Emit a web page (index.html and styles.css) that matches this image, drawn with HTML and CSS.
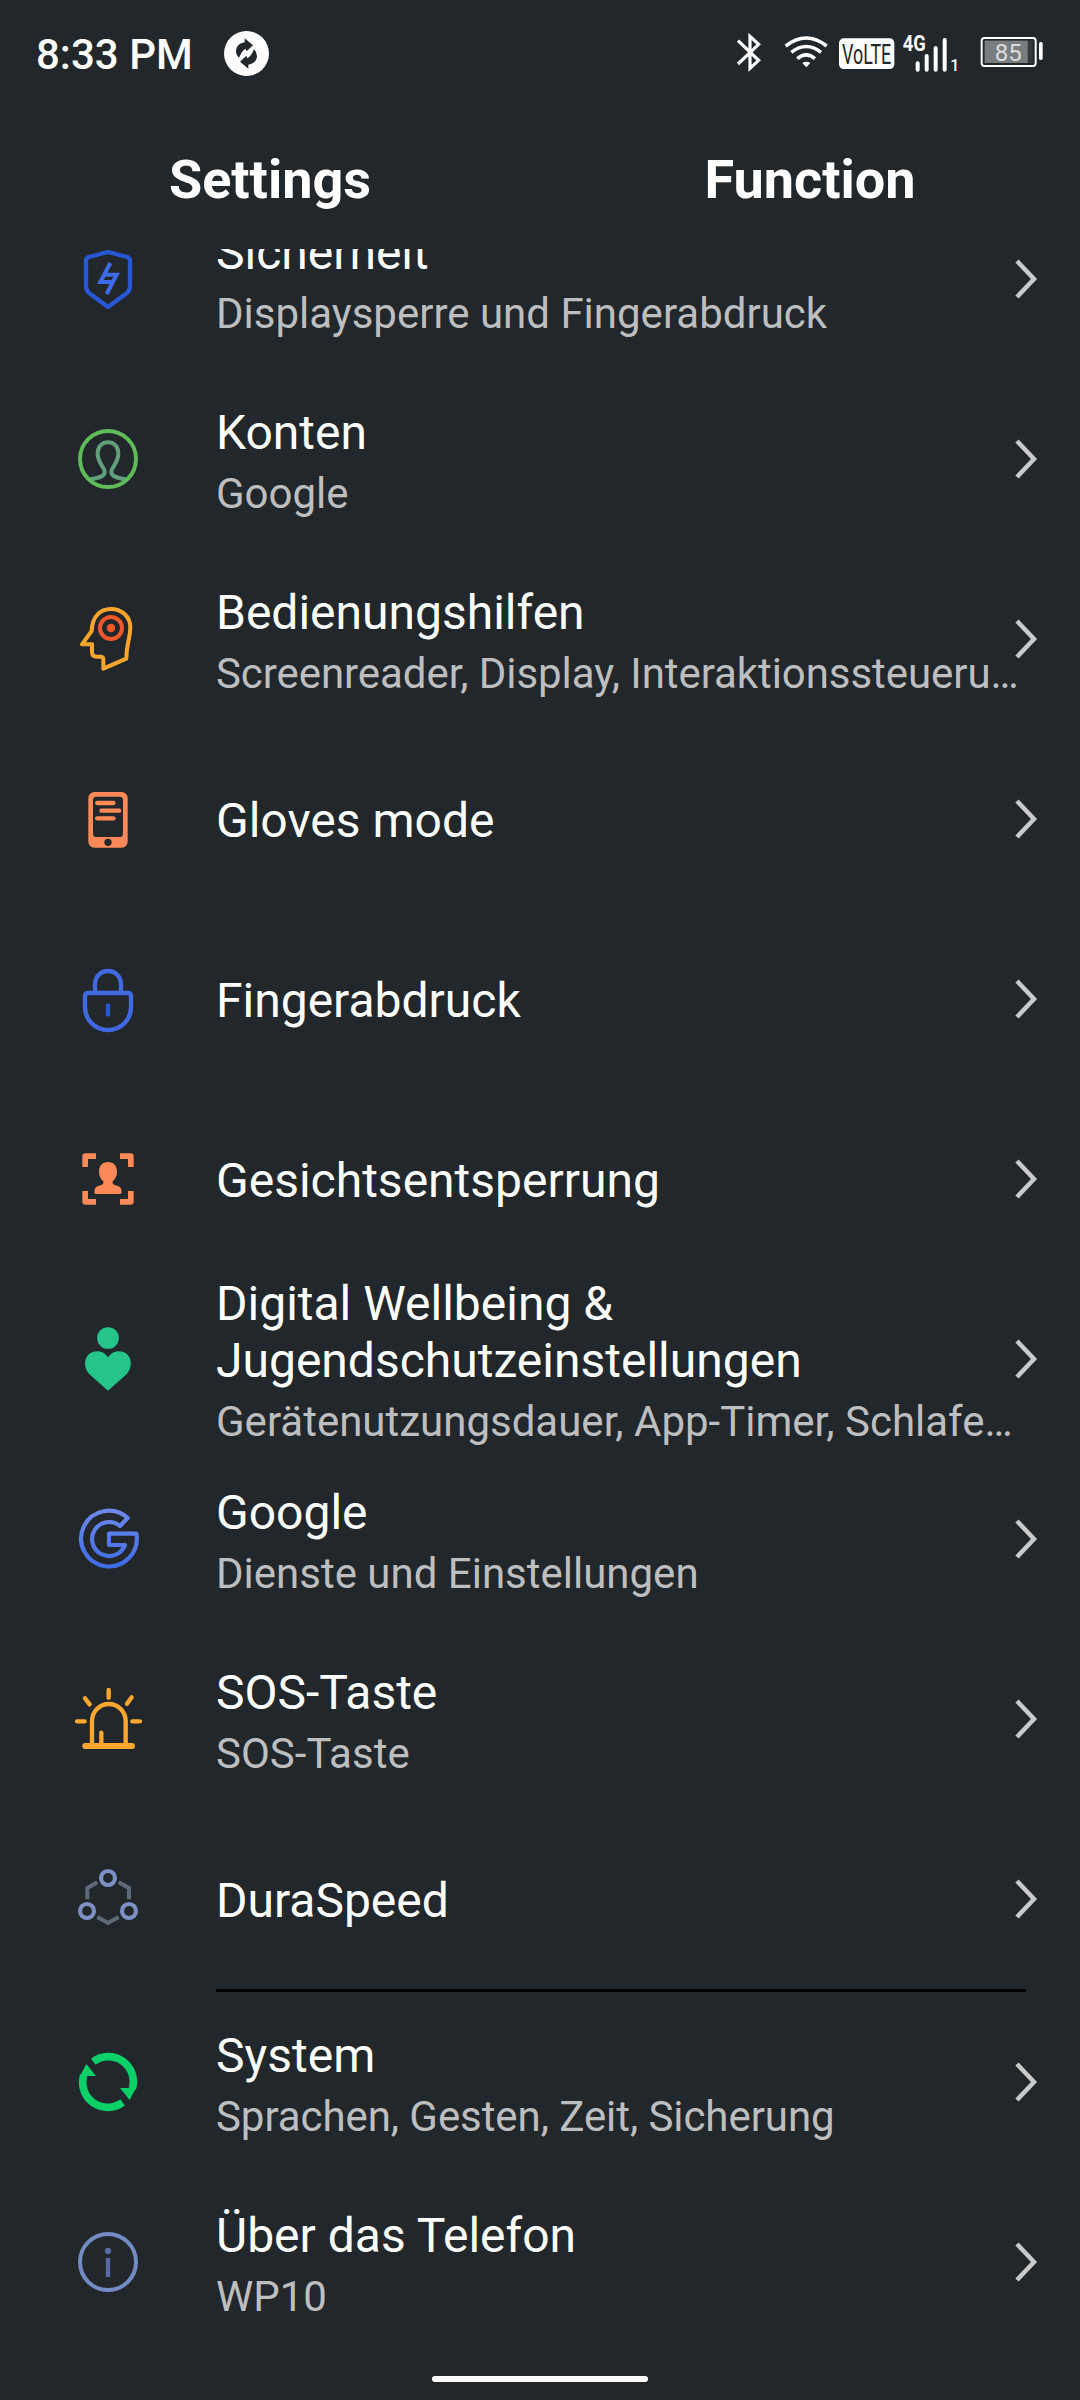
FILE: index.html
```html
<!DOCTYPE html>
<html lang="de">
<head>
<meta charset="utf-8">
<title>Settings</title>
<link rel="stylesheet" href="styles.css">
</head>
<body>
<div class="screen">
  <header class="statusbar">
    <span class="clock">8:33 PM</span>
    <svg class="sync" viewBox="0 0 135 135">
      <circle cx="67.5" cy="67.5" r="67.5" fill="#fff"/>
      <g fill="#22272b">
        <path id="half" d="M62 22 L87 43 L68 61 L65 53 Q54 58 45 80 Q33 68 37 53 Q43 36 62 34 Z"/>
        <use href="#half" transform="rotate(180 67.5 67.5)"/>
      </g>
    </svg>
    <div class="indicators">
      <svg width="40" height="46" viewBox="100 90 120 138" fill="none" stroke="#fff" stroke-width="9.500">
        <path d="M115 122 L177 181 L151 205 V109 L177 133 L115 192"/>
      </svg>
      <svg width="60" height="46" viewBox="220 90 180 138" fill="none" stroke="#fff" stroke-width="10.500">
        <path d="M258 138 Q320 90 381 138"/>
        <path d="M275 157 Q320 122 364 157"/>
        <path d="M293 176 Q320 153 346 176"/>
        <path d="M308 189 Q320 182 332 189 L320 202Z" fill="#fff" stroke="none"/>
      </svg>
      <svg width="65" height="46" viewBox="400 90 195 138">
        <rect x="418" y="115" width="166" height="92" rx="14" fill="#fff"/>
        <text class="volte" transform="translate(427 192) scale(.655 1)">VoLTE</text>
      </svg>
      <svg width="70" height="46" viewBox="595 90 210 138">
        <text class="net" transform="translate(609 154) scale(.86 1)">4G</text>
        <g stroke="#fff" stroke-width="12" stroke-linecap="round">
          <path d="M654 190V209M681 168V209M708 144V209M735 120V209"/>
        </g>
        <text class="sim" x="752" y="213">1</text>
      </svg>
      <svg width="77" height="46" viewBox="805 90 231 138">
        <rect x="846" y="114" width="162" height="84" rx="8" fill="none" stroke="#fff" stroke-width="6"/>
        <rect x="855" y="122" width="144" height="67" fill="#34393c"/>
        <rect x="855" y="122" width="129" height="67" fill="#7a7d80"/>
        <rect x="1018" y="126" width="11" height="54" rx="5" fill="#fff"/>
        <text class="level" x="885" y="182">85</text>
      </svg>
    </div>
  </header>

  <nav class="tabs">
    <div class="tab">Settings</div>
    <div class="tab">Function</div>
  </nav>

  <main class="viewport">
    <div class="list">
      <div class="row">
        <svg class="icon" viewBox="0 0 216 216" fill="none">
          <path d="M108 27 L166 42 Q174 45 174 53 V130 Q174 143 164 151 L108 192 L52 151 Q42 143 42 130 V53 Q42 45 50 42Z" stroke="#2857d4" stroke-width="13" stroke-linejoin="round"/>
          <path d="M115 60 L85 117 H118 M104 153 L134 95 H98" stroke="#3f6ae8" stroke-width="12"/>
        </svg>
        <div class="label"><div class="title">Sicherheit</div><div class="sub">Displaysperre und Fingerabdruck</div></div>
        <svg class="chevron" viewBox="0 0 24 42"><path d="M3 3 L20 21 L3 39"/></svg>
      </div>
      <div class="row">
        <svg class="icon" viewBox="0 0 216 216" fill="none">
          <path d="M54 169 C84 164 98 160 98 146 C98 132 77 122 77 91 C77 70 91 58 108 58 C125 58 139 70 139 91 C139 122 118 132 118 146 C118 160 132 164 162 169" stroke="#62a07d" stroke-width="12"/>
          <circle cx="108" cy="108" r="84" stroke="#5fbb5a" stroke-width="12"/>
        </svg>
        <div class="label"><div class="title">Konten</div><div class="sub">Google</div></div>
        <svg class="chevron" viewBox="0 0 24 42"><path d="M3 3 L20 21 L3 39"/></svg>
      </div>
      <div class="row">
        <svg class="icon" viewBox="0 0 216 216" fill="none">
          <path d="M30 124 H60 V146 Q60 161 74 161 H86 Q94 161 94 169 V197 L163 167 Q163 145 168 120 C174 92 175 90 175 73 C175 42 150 18 117 18 C84 18 60 42 59 84 Z" stroke="#fba52e" stroke-width="12" stroke-linejoin="round"/>
          <circle cx="117" cy="75" r="33" stroke="#f0572a" stroke-width="12"/>
          <circle cx="117" cy="75" r="12.500" fill="#f0572a"/>
        </svg>
        <div class="label"><div class="title">Bedienungshilfen</div><div class="sub tight">Screenreader, Display, Interaktionssteueru…</div></div>
        <svg class="chevron" viewBox="0 0 24 42"><path d="M3 3 L20 21 L3 39"/></svg>
      </div>
      <div class="row">
        <svg class="icon" viewBox="0 0 216 216" fill="#ff8a57">
          <rect x="49" y="27" width="118" height="167" rx="18"/>
          <rect x="63" y="41" width="90" height="121" rx="10" fill="#22272b"/>
          <circle cx="108" cy="178" r="11" fill="#22272b"/>
          <rect x="69" y="53.500" width="62" height="13" rx="6.500"/>
          <rect x="82" y="76.500" width="66" height="13" rx="6.500"/>
          <rect x="69" y="99.500" width="62" height="13" rx="6.500"/>
        </svg>
        <div class="label"><div class="title">Gloves mode</div></div>
        <svg class="chevron" viewBox="0 0 24 42"><path d="M3 3 L20 21 L3 39"/></svg>
      </div>
      <div class="row">
        <svg class="icon" viewBox="0 0 216 216" fill="none" stroke="#4069e2" stroke-width="13">
          <path d="M69 88 V63 A39 39 0 0 1 147 63 V88"/>
          <path d="M49 90 H167 Q177 90 177 100 V132 C177 170 147 201 108 201 C69 201 39 170 39 132 V100 Q39 90 49 90Z"/>
          <path d="M108 122 V160" stroke="#2857d4"/>
        </svg>
        <div class="label"><div class="title">Fingerabdruck</div></div>
        <svg class="chevron" viewBox="0 0 24 42"><path d="M3 3 L20 21 L3 39"/></svg>
      </div>
      <div class="row">
        <svg class="icon" viewBox="0 0 216 216" fill="none">
          <path d="M39.500 72 V39.500 H72 M144 39.500 H176.500 V72 M176.500 144 V176.500 H144 M72 176.500 H39.500 V144" stroke="#ff8a57" stroke-width="17" stroke-linejoin="round"/>
          <path d="M108 57 C125 57 135 69 135 86 C135 100 129 109 122 115 Q120 125 130 127 Q149 129 149 147 Q149 153 144 153 H72 Q67 153 67 147 Q67 129 86 127 Q96 125 94 115 C87 109 81 100 81 86 C81 69 91 57 108 57Z" fill="#ff8a57"/>
        </svg>
        <div class="label"><div class="title">Gesichtsentsperrung</div></div>
        <svg class="chevron" viewBox="0 0 24 42"><path d="M3 3 L20 21 L3 39"/></svg>
      </div>
      <div class="row">
        <svg class="icon" viewBox="0 0 216 216" fill="#24c48b">
          <circle cx="108" cy="45" r="32.500"/>
          <path d="M108 203 L54 155 C28 130 38 85 75 85 C90 85 100 92 108 103 C116 92 126 85 141 85 C178 85 188 130 162 155Z"/>
        </svg>
        <div class="label"><div class="title">Digital Wellbeing &amp;<br>Jugendschutzeinstellungen</div><div class="sub">Gerätenutzungsdauer, App-Timer, Schlafe…</div></div>
        <svg class="chevron" viewBox="0 0 24 42"><path d="M3 3 L20 21 L3 39"/></svg>
      </div>
      <div class="row">
        <svg class="icon" viewBox="0 0 216 216" fill="none">
          <defs><linearGradient id="blue" x1="0" y1="0" x2="0" y2="1"><stop offset="0" stop-color="#6f88ec"/><stop offset="1" stop-color="#3f6de8"/></linearGradient></defs>
          <path d="M167 45 A83.500 83.500 0 1 0 193 92 H111 V126 H159 A51 51 0 1 1 144 69 Z" stroke="url(#blue)" stroke-width="12.500" stroke-linejoin="round"/>
        </svg>
        <div class="label"><div class="title">Google</div><div class="sub">Dienste und Einstellungen</div></div>
        <svg class="chevron" viewBox="0 0 24 42"><path d="M3 3 L20 21 L3 39"/></svg>
      </div>
      <div class="row">
        <svg class="icon" viewBox="0 0 216 216" fill="none" stroke="#ffa72f" stroke-width="13" stroke-linecap="round">
          <path d="M60 186 V114 A50.500 51 0 0 1 161 114 V186 M88 149 V186"/>
          <path d="M40 189 H180" stroke-width="18"/>
          <path d="M110 21 V44 M15 115 H38 M181 115 H204 M39 46 L53 64 M179 43 L165 62"/>
        </svg>
        <div class="label"><div class="title">SOS-Taste</div><div class="sub">SOS-Taste</div></div>
        <svg class="chevron" viewBox="0 0 24 42"><path d="M3 3 L20 21 L3 39"/></svg>
      </div>
      <div class="row">
        <svg class="icon" viewBox="0 0 216 216" fill="none">
          <g stroke="#7c90c4" stroke-width="12.500"><circle cx="108" cy="45" r="21"/><circle cx="45" cy="144" r="21"/><circle cx="171" cy="144" r="21"/></g>
          <path d="M76 58 L46 75 V109 M140 58 L171 75 V109 M76 162 L108 180 L140 162" stroke="#5e6a7a" stroke-width="12"/>
        </svg>
        <div class="label"><div class="title">DuraSpeed</div></div>
        <svg class="chevron" viewBox="0 0 24 42"><path d="M3 3 L20 21 L3 39"/></svg>
      </div>
      <div class="divider"></div>
      <div class="row">
        <svg class="icon" viewBox="0 0 216 216" fill="#0ad06a">
          <g id="arc"><path d="M64 47 A75 75 0 0 1 181 128" fill="none" stroke="#0ad06a" stroke-width="23"/><path d="M144 126 H192 L173 162Z"/></g>
          <use href="#arc" transform="rotate(180 108 108)"/>
        </svg>
        <div class="label"><div class="title">System</div><div class="sub tight">Sprachen, Gesten, Zeit, Sicherung</div></div>
        <svg class="chevron" viewBox="0 0 24 42"><path d="M3 3 L20 21 L3 39"/></svg>
      </div>
      <div class="row">
        <svg class="icon" viewBox="0 0 216 216" fill="none">
          <circle cx="108" cy="108" r="84" stroke="#738bc2" stroke-width="12"/>
          <circle cx="108" cy="75" r="9.500" fill="#5a6aa5"/>
          <path d="M108 96 V153" stroke="#5a6aa5" stroke-width="13"/>
        </svg>
        <div class="label"><div class="title">Über das Telefon</div><div class="sub">WP10</div></div>
        <svg class="chevron" viewBox="0 0 24 42"><path d="M3 3 L20 21 L3 39"/></svg>
      </div>
    </div>
  </main>

  <footer class="gesture"><div class="handle"></div></footer>
</div>
</body>
</html>
```
FILE: styles.css
```css
* { box-sizing: border-box; }

body {
  margin: 0;
  background: #22272b;
  color: #fff;
  font-family: Roboto, sans-serif;
}

svg { display: block; flex: none; }

.screen {
  width: 1080px;
  height: 2400px;
  display: flex;
  flex-direction: column;
  overflow: hidden;
}

.statusbar {
  height: 106px;
  display: flex;
  align-items: center;
  padding: 0 35px 0 36px;
}

.clock {
  width: 188px;
  font-size: 42px;
  font-weight: 500;
  line-height: 50px;
  padding-top: 3px;
  white-space: nowrap;
}

.sync { width: 45px; height: 45px; }

.indicators { display: flex; margin-left: auto; }

.volte { font: 400 82px Roboto, sans-serif; fill: #22272b; }
.net { font: 700 64px Roboto, sans-serif; fill: #fff; }
.sim { font: 500 48px Roboto, sans-serif; fill: #fff; }
.level { font: 400 72px Roboto, sans-serif; fill: #dcdcdc; }

.tabs {
  height: 143px;
  display: flex;
}

.tab {
  flex: 1;
  padding-top: 42px;
  text-align: center;
  font-size: 54px;
  font-weight: 700;
  line-height: 64px;
}

.viewport {
  height: 2103px;
  overflow: hidden;
}

/* The list is scrolled so that its first row is partly under the tabs. */
.list { margin-top: -60px; }

.row {
  height: 180px;
  display: flex;
  align-items: center;
}

.icon { width: 72px; height: 72px; margin: 0 72px; }

.label {
  width: 810px;
  padding-top: 3px;
  white-space: nowrap;
}

.title { font-size: 48px; line-height: 57px; }

.sub {
  padding-top: 8px;
  margin-bottom: -1px;
  font-size: 42px;
  line-height: 50px;
  color: #bdbebf;
}

.tight { letter-spacing: -0.07px; }

.chevron {
  width: 24px;
  height: 42px;
  margin-left: -12.5px;
  fill: none;
  stroke: #cacaca;
  stroke-width: 4.5;
}

.divider {
  height: 3px;
  margin: 0 54px 0 216px;
  background: #000;
}

.gesture {
  flex: 1;
  display: flex;
  justify-content: center;
  padding-top: 24px;
}

.handle {
  width: 216px;
  height: 6px;
  border-radius: 3px;
  background: #fff;
}
```
